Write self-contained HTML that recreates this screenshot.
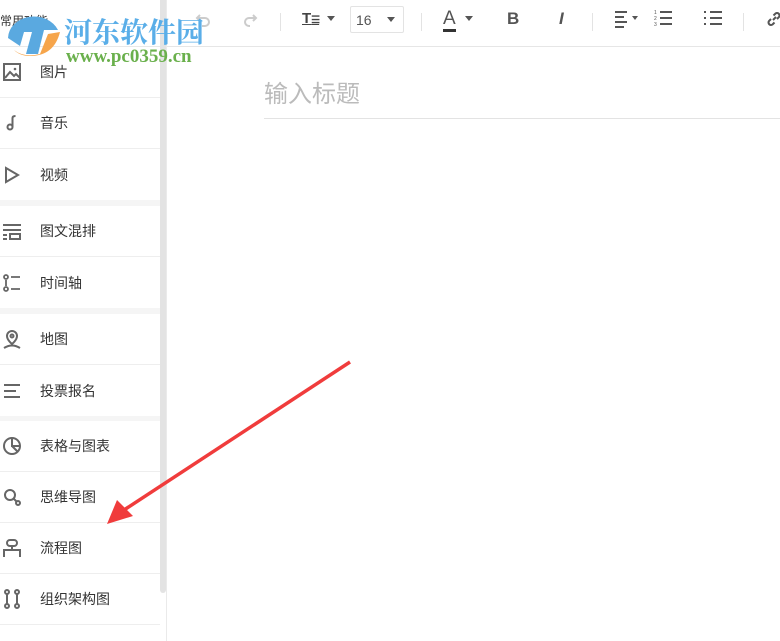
<!DOCTYPE html>
<html><head><meta charset="utf-8"><style>
*{margin:0;padding:0;box-sizing:border-box}
body{width:780px;height:641px;overflow:hidden;background:#fff;font-family:"Liberation Sans","Noto Sans CJK SC",sans-serif;position:relative;color:#333}
.side{position:absolute;left:0;top:0;width:160px;height:641px}
.hdr{height:47px;border-bottom:1px solid #e8e8e8;font-size:12px;padding-top:12px}
.item{height:51px;border-bottom:1px solid #eee;display:flex;align-items:center;font-size:14px;color:#333}
.item svg{width:20px;height:20px;margin-left:2px;margin-right:18px}
.gap{height:6px;background:#f5f5f5}
.sb{position:absolute;left:160px;top:0;width:6px;height:593px;background:#e3e3e3;border-radius:0 0 3px 3px}
.vl{position:absolute;left:166px;top:0;width:1px;height:641px;background:#eaeaea}
.tb{position:absolute;left:167px;top:0;right:0;height:47px;border-bottom:1px solid #e6e6e6}
.tb>*{position:absolute}
.t{position:absolute;left:264px;top:74px;font-size:24px;color:#bbb}
.line{position:absolute;left:264px;top:118px;right:0;height:1px;background:#e3e3e3}
svg{display:block}
</style></head><body>
<div class="side">
<div class="hdr">常用功能</div>
<div class="item"><svg viewBox="0 0 20 20" fill="none" stroke="#666" stroke-width="2"><rect x="2" y="2" width="16" height="16"/><path d="M3 16l5-6 4 4 2-2 4 4"/><circle cx="13" cy="7" r="1.3" fill="#666" stroke="none"/></svg>图片</div>
<div class="item"><svg viewBox="0 0 20 20" fill="none" stroke="#666" stroke-width="2"><circle cx="8" cy="14" r="2.5"/><path d="M10.5 14V5q0-2 3-2"/></svg>音乐</div>
<div class="item" style="border-bottom:none"><svg viewBox="0 0 20 20" fill="none" stroke="#666" stroke-width="2"><path d="M4 3l12 7-12 7z"/></svg>视频</div>
<div class="gap"></div>
<div class="item"><svg viewBox="0 0 20 20" fill="none" stroke="#666" stroke-width="2"><path d="M1 4h18M1 9h18M1 14h4M1 18h4"/><rect x="8" y="13" width="10" height="5"/></svg>图文混排</div>
<div class="item" style="border-bottom:none"><svg viewBox="0 0 20 20" fill="none" stroke="#666" stroke-width="1.8"><circle cx="4" cy="4" r="2"/><circle cx="4" cy="16" r="2"/><path d="M4 7v6M9 4h9M9 16h9"/></svg>时间轴</div>
<div class="gap"></div>
<div class="item"><svg viewBox="0 0 20 20" fill="none" stroke="#666" stroke-width="2"><path d="M10 15s-5-4-5-8a5 5 0 0110 0c0 4-5 8-5 8z"/><circle cx="10" cy="7" r="1.5"/><path d="M2 19q8-5 16 0"/></svg>地图</div>
<div class="item" style="border-bottom:none"><svg viewBox="0 0 20 20" fill="none" stroke="#666" stroke-width="2"><path d="M2 4h16M2 10h12M2 16h16"/></svg>投票报名</div>
<div class="gap" style="height:5px"></div>
<div class="item"><svg viewBox="0 0 20 20" fill="none" stroke="#666" stroke-width="2"><circle cx="10" cy="10" r="8"/><path d="M10 2v8h8"/><path d="M10 10l6 6" /></svg>表格与图表</div>
<div class="item"><svg viewBox="0 0 20 20" fill="none" stroke="#666" stroke-width="2"><circle cx="8" cy="8" r="5"/><circle cx="16" cy="16" r="2"/><path d="M11.5 11.5l3 3"/></svg>思维导图</div>
<div class="item"><svg viewBox="0 0 20 20" fill="none" stroke="#666" stroke-width="2"><rect x="5" y="2" width="10" height="6" rx="3"/><path d="M10 8v4M2 19v-7h16v7"/></svg>流程图</div>
<div class="item"><svg viewBox="0 0 20 20" fill="none" stroke="#666" stroke-width="2"><circle cx="5" cy="3" r="2"/><circle cx="5" cy="17" r="2"/><circle cx="15" cy="3" r="2"/><circle cx="15" cy="17" r="2"/><path d="M5 5v10M15 5v10"/></svg>组织架构图</div>
</div>
<div class="sb"></div><div class="vl"></div>
<div class="tb">
<svg style="left:28px;top:12px" width="16" height="16" viewBox="0 0 16 16" fill="none" stroke="#ccc" stroke-width="2"><path d="M5 3L2 6l3 3M2 6h8a4 4 0 010 8H7"/></svg>
<svg style="left:75px;top:12px" width="16" height="16" viewBox="0 0 16 16" fill="none" stroke="#ccc" stroke-width="2"><path d="M11 3l3 3-3 3M14 6H7a4 4 0 000 8h1"/></svg>
<div style="left:113px;top:13px;width:1px;height:18px;background:#e3e3e3"></div>
<div style="left:135px;top:10px;font-size:15px;color:#444;text-decoration:underline;font-weight:bold">T<span style="font-size:10px;letter-spacing:-1px">☰</span></div>
<div style="left:160px;top:16px;border:4px solid transparent;border-top:5px solid #555"></div>
<div style="left:183px;top:6px;width:54px;height:27px;border:1px solid #e3e3e3;border-radius:2px;font-size:14px;color:#555;padding:5px 0 0 5px">16<span style="position:absolute;left:36px;top:10px;border:4px solid transparent;border-top:5px solid #555"></span></div>
<div style="left:254px;top:13px;width:1px;height:18px;background:#e3e3e3"></div>
<div style="left:276px;top:8px;font-size:19px;color:#555">A</div>
<div style="left:276px;top:29px;width:13px;height:3px;background:#333"></div>
<div style="left:298px;top:16px;border:4px solid transparent;border-top:5px solid #555"></div>
<div style="left:340px;top:9px;font-size:17px;color:#555;font-weight:bold">B</div>
<div style="left:392px;top:9px;font-size:17px;color:#555;font-style:italic;font-weight:bold">I</div>
<div style="left:425px;top:13px;width:1px;height:18px;background:#e3e3e3"></div>
<svg style="left:448px;top:10px" width="14" height="18" viewBox="0 0 14 18" stroke="#555" stroke-width="2"><path d="M0 2h12M0 7h9M0 12h12M0 17h9"/></svg>
<div style="left:465px;top:16px;border:3px solid transparent;border-top:4px solid #555"></div>
<svg style="left:487px;top:9px" width="18" height="20" viewBox="0 0 18 20" stroke="#555" stroke-width="2"><path d="M6 3h12M6 9h12M6 15h12"/><text x="0" y="5" font-size="5" fill="#555" stroke="none">1</text><text x="0" y="11" font-size="5" fill="#555" stroke="none">2</text><text x="0" y="17" font-size="5" fill="#555" stroke="none">3</text></svg>
<svg style="left:537px;top:9px" width="18" height="20" viewBox="0 0 18 20" stroke="#555" stroke-width="2"><path d="M0 3h2M6 3h12M0 9h2M6 9h12M0 15h2M6 15h12"/></svg>
<div style="left:576px;top:13px;width:1px;height:18px;background:#e3e3e3"></div>
<svg style="left:599px;top:11px" width="16" height="16" viewBox="0 0 16 16" fill="none" stroke="#555" stroke-width="2"><path d="M7 9l3-3M5 8l-2 2a2.5 2.5 0 003.5 3.5l2-2M11 8l2-2a2.5 2.5 0 00-3.5-3.5l-2 2"/></svg>
</div>
<div class="t">输入标题</div>
<div class="line"></div>
<svg style="position:absolute;left:4px;top:10px" width="58" height="48" viewBox="0 0 58 48"><path d="M4 28a26 22 0 0150-8L40 20l-6 24H22l6-22h-8l-4 14z" fill="#5aa9e0"/><path d="M10 40q10 8 26 4l8-20 12-2q-6 24-30 24-10 0-16-6z" fill="#f6a54b"/></svg>
<div style="position:absolute;left:64px;top:11px;font-size:28px;font-weight:bold;color:#5aaee8;font-family:'Liberation Serif','Noto Serif CJK SC',serif">河东软件园</div>
<div style="position:absolute;left:66px;top:46px;font-size:19px;font-weight:bold;color:#6ab04c;font-family:'Liberation Serif',serif">www.pc0359.cn</div>
<svg style="position:absolute;left:0;top:0" width="780" height="641"><path d="M350 362L124 510" stroke="#f03c3c" stroke-width="3.5"/><path d="M107 524l10-24 16 16z" fill="#f03c3c"/></svg>
</body></html>
